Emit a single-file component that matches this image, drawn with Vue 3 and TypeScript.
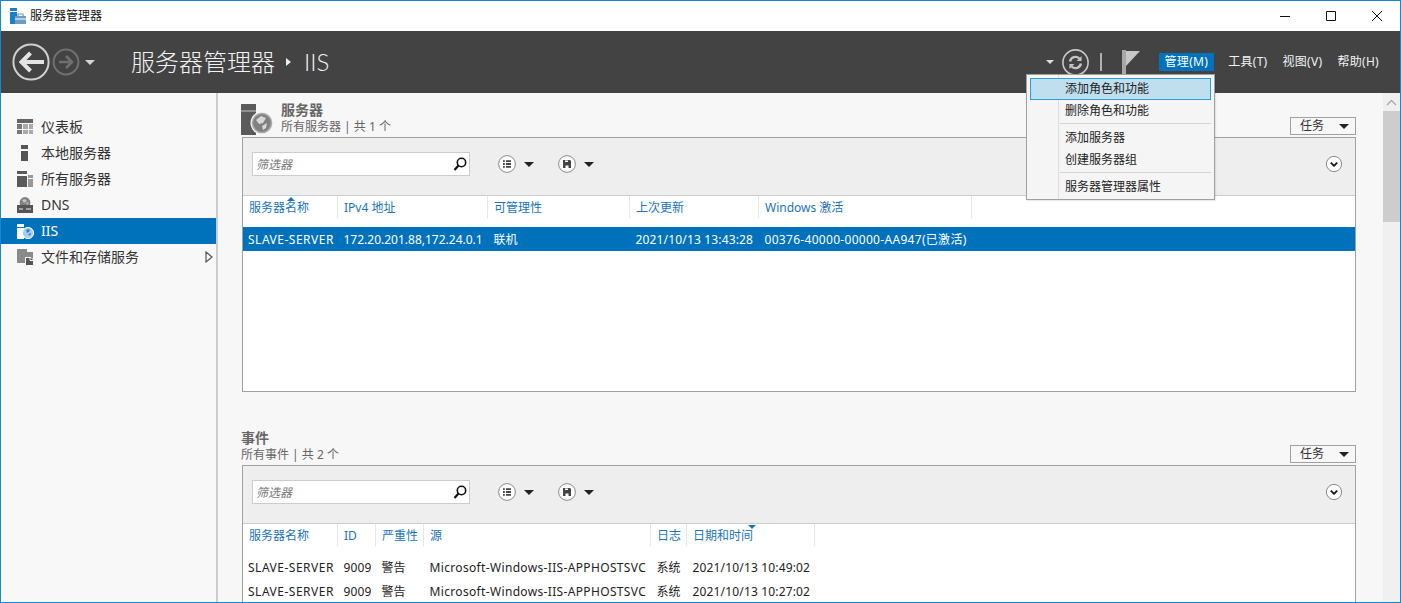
<script setup lang="ts">
interface NavItem {
  label: string;
  icon: string;
  active?: boolean;
  more?: boolean;
}

interface Column {
  title: string;
  width: number;
  sort?: 'up' | 'down';
  track: number;
}

interface Section {
  title: string;
  subtitle: string;
  withIcon: boolean;
  columns: Column[];
  rows: string[][];
  selected: number;
}

const navItems: NavItem[] = [
  { label: '仪表板', icon: 'dash' },
  { label: '本地服务器', icon: 'local' },
  { label: '所有服务器', icon: 'all' },
  { label: 'DNS', icon: 'dns' },
  { label: 'IIS', icon: 'iis', active: true },
  { label: '文件和存储服务', icon: 'files', more: true },
];

const sections: Section[] = [
  {
    title: '服务器',
    subtitle: '所有服务器 | 共 1 个',
    withIcon: true,
    selected: 0,
    columns: [
      { title: '服务器名称', width: 95, sort: 'up', track: 0.5 },
      { title: 'IPv4 地址', width: 150, track: 0 },
      { title: '可管理性', width: 142, track: 0 },
      { title: '上次更新', width: 129, track: 0.16 },
      { title: 'Windows 激活', width: 213, track: 0.3 },
    ],
    rows: [
      ['SLAVE-SERVER', '172.20.201.88,172.24.0.1', '联机', '2021/10/13 13:43:28', '00376-40000-00000-AA947(已激活)'],
    ],
  },
  {
    title: '事件',
    subtitle: '所有事件 | 共 2 个',
    withIcon: false,
    selected: -1,
    columns: [
      { title: '服务器名称', width: 95, track: 0.5 },
      { title: 'ID', width: 38, track: 0.1 },
      { title: '严重性', width: 48, track: 0 },
      { title: '源', width: 227, track: 0.34 },
      { title: '日志', width: 36, track: 0 },
      { title: '日期和时间', width: 128, sort: 'down', track: 0.16 },
    ],
    rows: [
      ['SLAVE-SERVER', '9009', '警告', 'Microsoft-Windows-IIS-APPHOSTSVC', '系统', '2021/10/13 10:49:02'],
      ['SLAVE-SERVER', '9009', '警告', 'Microsoft-Windows-IIS-APPHOSTSVC', '系统', '2021/10/13 10:27:02'],
    ],
  },
];

const topMenus = ['管理(M)', '工具(T)', '视图(V)', '帮助(H)'];

const gridFor = (columns: Column[]) => ({
  gridTemplateColumns: columns.map((c) => `${c.width}px`).join(' ') + ' 1fr',
});
</script>

<template>
  <div class="window">
    <div class="titlebar">
      <svg class="app-icon" width="16" height="16" viewBox="0 0 16 16">
        <path d="M0 0h7v3H0zM0 4h7v12H0z" fill="#1b7fc4" />
        <path d="M5 8h11v8H5z" fill="#6d9cbc" />
        <path d="M8 8V6h5v2" fill="none" stroke="#6d9cbc" stroke-width="1.2" />
        <path d="M5 11h11" stroke="#fff" stroke-width="1" />
      </svg>
      <span class="title-text">服务器管理器</span>
      <div class="win-controls">
        <svg width="12" height="12" viewBox="0 0 12 12"><path d="M1 6.5h10" stroke="#111" /></svg>
        <svg width="12" height="12" viewBox="0 0 12 12"><path d="M1.5 1.5h9v9h-9z" fill="none" stroke="#111" /></svg>
        <svg width="12" height="12" viewBox="0 0 12 12"><path d="M1 1l10 10M11 1L1 11" stroke="#111" fill="none" /></svg>
      </div>
    </div>

    <header class="appbar">
      <svg class="nav-arrows" width="92" height="40" viewBox="0 0 92 40">
        <circle cx="19" cy="20" r="17.6" fill="none" stroke="#d0d0d0" stroke-width="2" />
        <path d="M9 20h23M18.5 11l-9 9 9 9" fill="none" stroke="#e4e4e4" stroke-width="4" />
        <circle cx="54" cy="20" r="12.4" fill="none" stroke="#707070" stroke-width="2" />
        <path d="M47 20h13M54 14l6 6-6 6" fill="none" stroke="#707070" stroke-width="2.6" />
        <path d="M73 18h10l-5 5z" fill="#d4d4d4" />
      </svg>
      <div class="crumbs">
        <span>服务器管理器</span>
        <i class="crumb-arrow"></i>
        <span class="crumb-leaf">IIS</span>
      </div>
      <div class="bar-right">
        <i class="mini-down"></i>
        <svg class="refresh" width="27" height="27" viewBox="0 0 27 27">
          <circle cx="13.5" cy="13.5" r="12.6" fill="none" stroke="#c8c8c8" stroke-width="1.6" />
          <path d="M8 12.5a5.6 5.6 0 0 1 9.4-3M19 14.5a5.6 5.6 0 0 1-9.4 3" fill="none" stroke="#c4c4c4" stroke-width="2.4" />
          <path d="M19.6 7v5h-5zM7.4 20v-5h5z" fill="#c4c4c4" />
        </svg>
        <i class="bar-sep"></i>
        <svg class="flag" width="20" height="26" viewBox="0 0 20 26">
          <path d="M0 1h4v24H0z" fill="#a8a8a8" />
          <path d="M4 2h14L4 17z" fill="#c8c8c8" />
        </svg>
        <nav class="top-menus">
          <span v-for="(m, i) in topMenus" :key="m" class="top-menu" :class="{ open: i === 0 }">{{ m }}</span>
        </nav>
      </div>
    </header>

    <div class="body">
      <aside class="sidebar">
        <div v-for="item in navItems" :key="item.label" class="nav-row" :class="{ active: item.active }">
          <svg class="nav-icon" width="18" height="18" viewBox="0 0 18 18">
            <template v-if="item.icon === 'dash'">
              <path d="M1 1h16v4H1z" fill="#666" />
              <path d="M1 6h5v5H1zM1 12h5v4H1z" fill="#777" />
              <path d="M7 6h5v5H7zM13 6h4v5h-4zM7 12h5v4H7zM13 12h4v4h-4z" fill="#aaa" />
            </template>
            <template v-else-if="item.icon === 'local'">
              <path d="M5 1h7v4H5zM5 7h7v10H5z" fill="#555" />
            </template>
            <template v-else-if="item.icon === 'all'">
              <path d="M1 1h10v3H1zM1 6h10v11H1z" fill="#5a5a5a" />
              <path d="M12 5h5v3h-5zM12 9h5v8h-5z" fill="#999" />
            </template>
            <template v-else-if="item.icon === 'dns'">
              <circle cx="9" cy="6.5" r="5.4" fill="#808080" />
              <path d="M6 4l3-1 2 2-3 2zM10 7l2.5-1-1 3z" fill="#c4c4c4" />
              <path d="M1 9h16v8H1z" fill="#555" />
              <path d="M3 13h4M10 13h5" stroke="#eee" stroke-width="1.2" />
            </template>
            <template v-else-if="item.icon === 'iis'">
              <path d="M1 2h7v3H1zM1 6h7v11H1z" fill="#fff" />
              <circle cx="12" cy="11" r="5.6" fill="#a8d0ec" stroke="#fff" stroke-width="1" />
              <path d="M10 8l3-1 1 2-3 2zM12 12l3-1-1 3z" fill="#2a86c8" />
            </template>
            <template v-else>
              <path d="M1 1h10v3h6v11H1z" fill="#8a8a8a" />
              <path d="M9.5 9.5h5.5l2.500 2.500v5.500h-8z" fill="#555" stroke="#f8f8f8" />
              <path d="M14 9.5v3h3" fill="none" stroke="#f8f8f8" />
            </template>
          </svg>
          <span>{{ item.label }}</span>
          <svg v-if="item.more" class="nav-more" width="8" height="12" viewBox="0 0 8 12">
            <path d="M1 1l6 5-6 5z" fill="#f8f8f8" stroke="#555" stroke-width="1.2" />
          </svg>
        </div>
      </aside>

      <main class="content">
        <section v-for="sec in sections" :key="sec.title" class="section">
          <div class="sec-head">
            <svg v-if="sec.withIcon" class="sec-icon" width="32" height="31" viewBox="0 0 32 31">
              <path d="M0 0h15v6H0zM0 8h15v23H0z" fill="#5a5a5a" />
              <path d="M0 6h15v2H0z" fill="#909090" />
              <circle cx="21" cy="19" r="11.5" fill="#f4f4f4" />
              <circle cx="21" cy="19" r="9.5" fill="#808080" stroke="#a8a8a8" stroke-width="1.6" />
              <path d="M15 16l5-4 5 2-3 5-4 1zM21 22l5-3-1 5-3 2z" fill="#d8d8d8" />
            </svg>
            <div class="sec-text" :class="{ indented: sec.withIcon }">
              <h2>{{ sec.title }}</h2>
              <p>{{ sec.subtitle }}</p>
            </div>
            <button class="tasks">任务<i class="tri"></i></button>
          </div>

          <div class="panel">
            <div class="toolbar">
              <div class="filter">
                <em>筛选器</em>
                <svg width="16" height="16" viewBox="0 0 16 16">
                  <circle cx="9.5" cy="6.5" r="4.2" fill="none" stroke="#111" stroke-width="1.6" />
                  <path d="M6.5 9.5L2.5 14" stroke="#111" stroke-width="2.2" />
                </svg>
              </div>
              <div class="tool">
                <svg width="18" height="18" viewBox="0 0 18 18">
                  <circle cx="9" cy="9" r="8.4" fill="#fff" stroke="#8a8a8a" />
                  <path d="M5 5.2h1.800v1.800H5zM5 8.100h1.800v1.800H5zM5 11h1.800v1.800H5zM8 5.200h5v1.800H8zM8 8.100h5v1.800H8zM8 11h5v1.800H8z" fill="#444" />
                </svg>
                <i class="tri"></i>
              </div>
              <div class="tool">
                <svg width="18" height="18" viewBox="0 0 18 18">
                  <circle cx="9" cy="9" r="8.4" fill="#fff" stroke="#8a8a8a" />
                  <path d="M5 5h7l1 1v7H5z" fill="#444" />
                  <path d="M7 5.5h3V7H7zM7.5 10.500h3V13h-3z" fill="#fff" />
                </svg>
                <i class="tri"></i>
              </div>
              <svg class="expand" width="18" height="18" viewBox="0 0 18 18">
                <circle cx="9" cy="9" r="7.6" fill="#fff" stroke="#8a8a8a" />
                <path d="M5.8 7.6L9 10.8l3.2-3.2" fill="none" stroke="#111" stroke-width="1.8" />
              </svg>
            </div>

            <div class="grid head" :style="gridFor(sec.columns)">
              <div v-for="col in sec.columns" :key="col.title" class="th">
                <i v-if="col.sort" class="sort" :class="col.sort"></i>
                {{ col.title }}
              </div>
            </div>
            <div
              v-for="(row, r) in sec.rows"
              :key="r"
              class="grid row"
              :class="{ selected: r === sec.selected }"
              :style="gridFor(sec.columns)"
            >
              <div
                v-for="(cell, c) in row"
                :key="c"
                class="td"
                :style="{ letterSpacing: `${sec.columns[c].track}px` }"
              >{{ cell }}</div>
            </div>
          </div>
        </section>
      </main>

      <div class="scrollbar">
        <div class="sb-up">
          <svg width="11" height="7" viewBox="0 0 11 7"><path d="M1 6l4.5-4.500L10 6" fill="none" stroke="#a8a8a8" stroke-width="1.4" /></svg>
        </div>
        <div class="sb-thumb"></div>
      </div>

      <div class="drop-menu">
        <div class="drop-item hover">添加角色和功能</div>
        <div class="drop-item">删除角色和功能</div>
        <div class="drop-sep"></div>
        <div class="drop-item">添加服务器</div>
        <div class="drop-item">创建服务器组</div>
        <div class="drop-sep"></div>
        <div class="drop-item">服务器管理器属性</div>
      </div>
    </div>
  </div>
</template>

<style>
html,
body {
  margin: 0;
  overflow: hidden;
}
</style>

<style scoped>
.window {
  width: 1401px;
  height: 603px;
  box-sizing: border-box;
  border: 1px solid #1a86d0;
  display: flex;
  flex-direction: column;
  overflow: hidden;
  background: #f7f7f7;
  font: 12px/16px "Noto Sans", "Noto Sans CJK SC", sans-serif;
  color: #222;
}

.titlebar {
  height: 30px;
  flex: none;
  background: #fff;
  display: flex;
  align-items: center;
  padding-left: 9px;
  color: #111;
}
.app-icon {
  margin-right: 4px;
}
.win-controls {
  margin-left: auto;
  display: flex;
  gap: 34px;
  padding-right: 17px;
}

.appbar {
  height: 62px;
  flex: none;
  background: #434343;
  display: flex;
  align-items: center;
  color: #f2f2f2;
  padding-left: 11px;
}
.nav-arrows {
  flex: none;
}
.crumbs {
  margin-left: 27px;
  display: flex;
  align-items: center;
  font-size: 24px;
  line-height: 30px;
  font-weight: 300;
}
.crumb-arrow {
  width: 0;
  height: 0;
  margin: 0 13px 0 11px;
  border-left: 5px solid #eee;
  border-top: 4px solid transparent;
  border-bottom: 4px solid transparent;
}
.crumb-leaf {
  font-family: Lato, "Noto Sans", sans-serif;
}
.bar-right {
  margin-left: auto;
  display: flex;
  align-items: center;
  padding-right: 15px;
}
.mini-down {
  width: 0;
  height: 0;
  border-top: 4px solid #ddd;
  border-left: 4px solid transparent;
  border-right: 4px solid transparent;
  margin-right: 8px;
}
.bar-sep {
  width: 2px;
  height: 18px;
  background: #b0b0b0;
  margin: 0 20px 0 11px;
}
.flag {
  margin-right: 17px;
}
.top-menus {
  display: flex;
  gap: 3px;
}
.top-menu {
  height: 18px;
  line-height: 18px;
  padding: 0 6px;
  letter-spacing: 0.3px;
}
.top-menu.open {
  background: #0072bc;
  color: #fff;
  margin-right: 5px;
}

.body {
  flex: 1;
  min-height: 0;
  display: flex;
  position: relative;
}

.sidebar {
  width: 215px;
  flex: none;
  padding-top: 21px;
  background: #f8f8f8;
  border-right: 2px solid #cccccc;
}
.nav-row {
  height: 26px;
  display: flex;
  align-items: center;
  padding-left: 15px;
  font-size: 14px;
  color: #333;
  position: relative;
}
.nav-row.active {
  background: #0072bc;
  color: #fff;
}
.nav-icon {
  margin-right: 7px;
  flex: none;
}
.nav-more {
  position: absolute;
  right: 3px;
  top: 7px;
}

.content {
  flex: 1;
  min-width: 0;
  padding: 9px 27px 0 24px;
  overflow: hidden;
}
.section {
  margin-bottom: 38px;
}
.sec-head {
  height: 35px;
  display: flex;
  position: relative;
}
.sec-icon {
  position: absolute;
  left: -1px;
  top: 2px;
}
.sec-text {
  margin-left: -1px;
}
.sec-text.indented {
  margin-left: 39px;
}
.sec-text h2 {
  margin: 0;
  font-size: 14px;
  line-height: 16px;
  font-weight: 700;
  color: #666;
}
.sec-text p {
  margin: 1px 0 0;
  color: #666;
}
.tasks {
  margin: 15px 0 0 auto;
  width: 66px;
  height: 18px;
  box-sizing: border-box;
  border: 1px solid #a0a0a0;
  background: #f7f7f7;
  padding: 0 6px 0 9px;
  display: flex;
  align-items: center;
  justify-content: space-between;
  font: inherit;
  color: #333;
}
.tri {
  width: 0;
  height: 0;
  border-top: 5px solid #222;
  border-left: 5px solid transparent;
  border-right: 5px solid transparent;
}

.panel {
  height: 255px;
  box-sizing: border-box;
  border: 1px solid #a0a0a0;
  background: #fff;
}
.toolbar {
  height: 58px;
  box-sizing: border-box;
  border-bottom: 1px solid #ccc;
  background: #eeeeee;
  display: flex;
  align-items: flex-start;
  padding: 14px 12px 0 9px;
}
.filter {
  width: 218px;
  height: 24px;
  box-sizing: border-box;
  border: 1px solid #ccc;
  background: #fff;
  display: flex;
  align-items: center;
  justify-content: space-between;
  padding: 0 1px 0 3px;
  color: #777;
}
.filter em {
  font-style: italic;
  padding-top: 1px;
}
.tool {
  display: flex;
  align-items: center;
  gap: 8px;
  height: 24px;
  margin-left: 28px;
}
.tool + .tool {
  margin-left: 24px;
}
.expand {
  margin: 3px 0 0 auto;
}

.grid {
  display: grid;
}
.head {
  height: 22px;
  margin-bottom: 9px;
}
.th {
  position: relative;
  padding: 4px 0 0 6px;
  color: #1a74bc;
  white-space: nowrap;
  border-right: 1px solid #e6e6e6;
}
.sort {
  position: absolute;
  left: 44px;
  top: 1px;
  width: 0;
  height: 0;
  border-left: 4px solid transparent;
  border-right: 4px solid transparent;
}
.sort.up {
  border-bottom: 4px solid #1a74bc;
}
.sort.down {
  left: 61px;
  border-top: 4px solid #1a74bc;
}
.row {
  height: 24px;
  align-items: center;
  color: #222;
}
.row.selected {
  background: #0072bc;
  color: #fff;
}
.td {
  padding: 1px 0 0 5.5px;
  white-space: nowrap;
}
.td:first-child {
  padding-left: 5px;
}

.scrollbar {
  width: 17px;
  flex: none;
  background: #f0f0f0;
}
.sb-up {
  height: 18px;
  display: flex;
  align-items: center;
  justify-content: center;
}
.sb-thumb {
  height: 111px;
  background: #cdcdcd;
}

.drop-menu {
  position: absolute;
  left: 1025px;
  top: -19px;
  width: 189px;
  height: 126px;
  box-sizing: border-box;
  border: 1px solid #a0a0a0;
  background: #f5f5f5;
  padding: 3px;
  background-image: linear-gradient(#dcdcdc, #dcdcdc);
  background-repeat: no-repeat;
  background-size: 1px 100%;
  background-position: 31px 0;
  box-shadow: 1px 1px 1px rgba(0, 0, 0, 0.08);
}
.drop-item {
  height: 22px;
  line-height: 22px;
  padding-left: 35px;
  box-sizing: border-box;
  color: #222;
}
.drop-item.hover {
  background: #c0dfee;
  outline: 1px solid #2b9fdc;
  outline-offset: -1px;
}
.drop-sep {
  height: 1px;
  margin: 1px 0 3px 30px;
  background: #d4d4d4;
}
</style>
